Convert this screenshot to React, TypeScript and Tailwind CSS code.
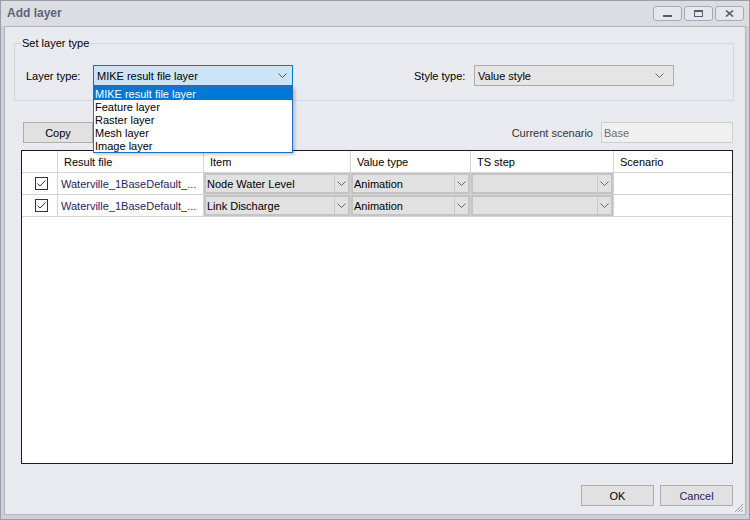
import React from 'react';

const Chevron = ({ color = '#555' }: { color?: string }) => (
  <svg width="9" height="5" viewBox="0 0 9 5">
    <path d="M0.5 0.5L4.5 4.5L8.5 0.5" fill="none" stroke={color} strokeWidth="1" />
  </svg>
);

const CheckBox = () => (
  <div className="w-[13px] h-[13px] border border-[#333] bg-white flex items-center justify-center">
    <svg width="11" height="11" viewBox="0 0 11 11">
      <path d="M1.5 5.5L4 8L9.5 2.5" fill="none" stroke="#333" strokeWidth="1" />
    </svg>
  </div>
);

const GridCombo = ({ text }: { text: string }) => (
  <div className="h-full flex border-2 border-[#c4c4c4] bg-[#e1e1e1]">
    <span className="flex-1 pl-[1px] pt-[1px] flex items-center truncate">{text}</span>
    <span className="w-[14px] border-l border-[#cacaca] flex items-center justify-center">
      <Chevron color="#666" />
    </span>
  </div>
);

const layerTypes = ['MIKE result file layer', 'Feature layer', 'Raster layer', 'Mesh layer', 'Image layer'];

const rows = [
  { file: 'Waterville_1BaseDefault_...', item: 'Node Water Level', value: 'Animation' },
  { file: 'Waterville_1BaseDefault_...', item: 'Link Discharge', value: 'Animation' },
];

const cell = 'border-r border-b border-[#d4d4d4]';

export default function App() {
  return (
    <div className="w-[750px] h-[520px] flex flex-col bg-[#cdcfd7] border border-[#9b9daa] font-['Liberation_Sans',Arial,sans-serif] text-[11px] leading-[13px] text-black select-none">
      {/* title bar */}
      <div className="h-[25px] flex items-center bg-[#dcdde3] pl-[6px] pr-[5px]">
        <span className="text-[12px] font-bold text-[#5f637b]">Add layer</span>
        <div className="ml-auto flex gap-[2px] mt-[-1px]">
          <button className="w-[29px] h-[15px] rounded-[3px] border border-[#a6a8b4] bg-[#e6e7ec] flex items-end justify-center pb-[3px]">
            <span className="w-[9px] h-[2px] bg-[#555a70]" />
          </button>
          <button className="w-[29px] h-[15px] rounded-[3px] border border-[#a6a8b4] bg-[#e6e7ec] flex items-center justify-center">
            <span className="w-[9px] h-[7px] border border-t-2 border-[#555a70]" />
          </button>
          <button className="w-[29px] h-[15px] rounded-[3px] border border-[#a6a8b4] bg-[#e6e7ec] flex items-center justify-center">
            <svg width="9" height="7" viewBox="0 0 9 7">
              <path d="M1 0.5L8 6.5M8 0.5L1 6.5" stroke="#555a70" strokeWidth="1.6" />
            </svg>
          </button>
        </div>
      </div>

      {/* content */}
      <div className="relative flex-1 mx-[3px] mb-[4px] border border-[#b2b4bf] bg-[#e9eaef] flex flex-col">
        {/* group box */}
        <div className="relative mt-[16px] ml-[9px] w-[720px] h-[58px] border border-[#d6d7dc]">
          <span className="absolute left-[6px] top-[-7px] px-[1px] bg-[#e9eaef]">Set layer type</span>
          <div className="flex items-center pl-[11px] pt-[21px]">
            <span className="w-[67px] pt-[1px]">Layer type:</span>
            <div className="relative w-[200px] h-[21px] border border-[#0078d7] bg-[#cce4f7] flex items-center pl-[3px] pr-[5px]">
              <span className="flex-1 pt-[1px]">MIKE result file layer</span>
              <Chevron />
              <div className="absolute z-10 left-[-1px] top-[20px] w-[200px] border border-[#1f6fc0] bg-white shadow-[2px_2px_3px_rgba(0,0,0,0.2)]">
                {layerTypes.map((t, i) => (
                  <div
                    key={t}
                    className={`h-[13px] pl-[1px] leading-[14px] ${i === 0 ? 'bg-[#0078d7] text-white' : ''}`}
                  >
                    {t}
                  </div>
                ))}
              </div>
            </div>
            <span className="ml-[121px] w-[60px] pt-[1px]">Style type:</span>
            <div className="w-[200px] h-[21px] border border-[#adadad] bg-[#e5e5e5] flex items-center pl-[3px] pr-[9px]">
              <span className="flex-1 pt-[1px]">Value style</span>
              <Chevron color="#666" />
            </div>
          </div>
        </div>

        {/* copy row */}
        <div className="flex items-center h-[21px] mt-[21px] ml-[18px] mr-[12px]">
          <button className="w-[70px] h-[21px] pt-[1px] border border-[#adadad] bg-[#e1e1e1]">Copy</button>
          <span className="ml-auto pt-[2px] text-[#333]">Current scenario</span>
          <div className="ml-[8px] w-[132px] h-[21px] pt-[1px] border border-[#cfcfcf] bg-[#f0f0f0] flex items-center pl-[2px] text-[#6d6d6d]">
            Base
          </div>
        </div>

        {/* grid */}
        <div className="mt-[7px] ml-[16px] w-[712px] h-[314px] border border-[#1a1a1a] bg-white">
          <div className="grid grid-cols-[36px_146px_147px_120px_143px_118px] auto-rows-[22px]">
            <div className={cell} />
            <div className={`${cell} pl-[6px] pt-[1px] flex items-center`}>Result file</div>
            <div className={`${cell} pl-[6px] pt-[1px] flex items-center`}>Item</div>
            <div className={`${cell} pl-[6px] pt-[1px] flex items-center`}>Value type</div>
            <div className={`${cell} pl-[6px] pt-[1px] flex items-center`}>TS step</div>
            <div className="border-b border-[#d4d4d4] pl-[6px] pt-[1px] flex items-center">Scenario</div>
            {rows.map((r, i) => (
              <React.Fragment key={i}>
                <div className={`${cell} flex items-center justify-center pl-[3px]`}>
                  <CheckBox />
                </div>
                <div className={`${cell} pl-[3px] pt-[1px] flex items-center text-[#1f2266] truncate`}>{r.file}</div>
                <div className={cell}>
                  <GridCombo text={r.item} />
                </div>
                <div className={cell}>
                  <GridCombo text={r.value} />
                </div>
                <div className={cell}>
                  <GridCombo text="" />
                </div>
                <div className="border-b border-[#d4d4d4]" />
              </React.Fragment>
            ))}
          </div>
        </div>

        {/* buttons */}
        <div className="flex justify-end gap-[6px] mt-[21px] mr-[12px]">
          <button className="w-[73px] h-[21px] pt-[1px] border border-[#adadad] bg-[#e1e1e1]">OK</button>
          <button className="w-[73px] h-[21px] pt-[1px] border border-[#adadad] bg-[#e1e1e1] text-[#1f2266]">Cancel</button>
        </div>

        {/* resize grip */}
        <svg className="absolute right-[1px] bottom-[1px]" width="11" height="11" viewBox="0 0 11 11">
          <path d="M10 2L2 10M10 5L5 10M10 8L8 10" stroke="#9a9ca8" strokeWidth="1" />
        </svg>
      </div>
    </div>
  );
}
